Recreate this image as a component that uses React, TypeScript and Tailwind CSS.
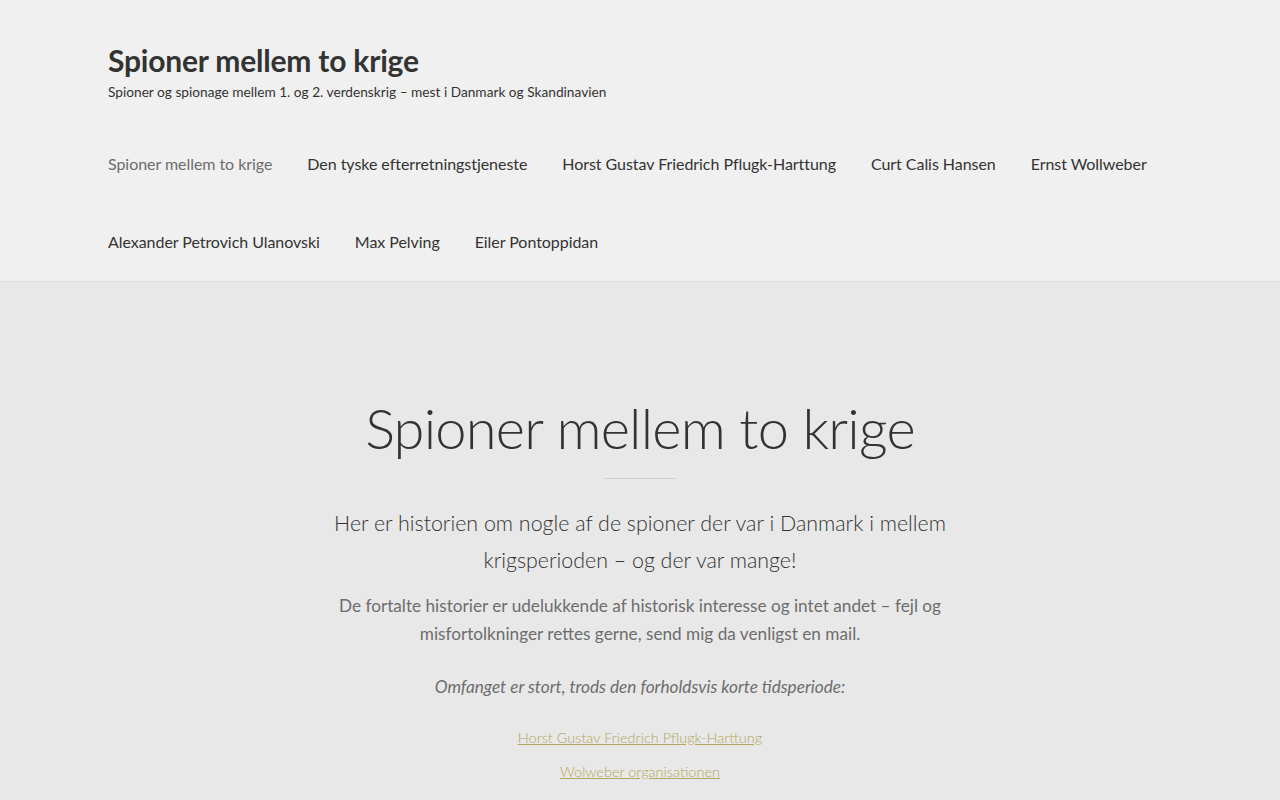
const navRow1 = [
  'Spioner mellem to krige',
  'Den tyske efterretningstjeneste',
  'Horst Gustav Friedrich Pflugk-Harttung',
  'Curt Calis Hansen',
  'Ernst Wollweber',
];
const navRow2 = ['Alexander Petrovich Ulanovski', 'Max Pelving', 'Eiler Pontoppidan'];

const font = { fontFamily: '"Source Sans Pro", Lato, "Liberation Sans", sans-serif' };

function NavRow({ items, first }: { items: string[]; first?: boolean }) {
  return (
    <ul className="flex h-[78px] items-center gap-[35px]">
      {items.map((item, i) => (
        <li key={item}>
          <a
            href="#"
            className={`text-[16px] tracking-[-0.05px] ${first && i === 0 ? 'text-[#6d6d6d]' : 'text-[#333333]'}`}
          >
            {item}
          </a>
        </li>
      ))}
    </ul>
  );
}

export default function App() {
  return (
    <div className="min-h-[800px] bg-[#e8e8e8]" style={font}>
      <header className="border-b border-[#dddddd] bg-[#f0f0f0]">
        <div className="mx-auto w-[1064px] pt-[39px]">
          <h1 className="text-[30px] font-bold leading-[42px] tracking-[-0.2px] text-[#333333]">
            Spioner mellem to krige
          </h1>
          <p className="mt-[1px] text-[13.7px] leading-[20px] text-[#333333]">
            Spioner og spionage mellem 1. og 2. verdenskrig – mest i Danmark og Skandinavien
          </p>
          <nav className="mt-[23px]">
            <NavRow items={navRow1} first />
            <NavRow items={navRow2} />
          </nav>
        </div>
      </header>

      <main className="mx-auto w-[640px] pt-[106px] text-center">
        <h2 className="text-[56px] font-light leading-[80px] tracking-[-0.8px] text-[#333333]">
          Spioner mellem to krige
        </h2>
        <div className="mx-auto mt-[10px] h-px w-[72px] bg-[#cfcfcf]" />
        <p className="mt-[26px] text-[21.4px] font-light leading-[37px] text-[#333333]">
          Her er historien om nogle af de spioner der var i Danmark i mellem krigsperioden – og der var mange!
        </p>
        <p className="mt-[13px] text-[17.2px] leading-[28px] text-[#6d6d6d]">
          De fortalte historier er udelukkende af historisk interesse og intet andet – fejl og misfortolkninger rettes gerne, send mig da venligst en mail.
        </p>
        <p className="mt-[25px] text-[17.2px] italic leading-[28px] text-[#6d6d6d]">
          Omfanget er stort, trods den forholdsvis korte tidsperiode:
        </p>
        <ul className="mt-[24px] flex flex-col items-center gap-[9px]">
          <li>
            <a href="#" className="text-[14.5px] font-light leading-[24px] text-[#b3a65a] underline">
              Horst Gustav Friedrich Pflugk-Harttung
            </a>
          </li>
          <li>
            <a href="#" className="text-[14.5px] font-light leading-[24px] text-[#b3a65a] underline">
              Wolweber organisationen
            </a>
          </li>
        </ul>
      </main>
    </div>
  );
}
